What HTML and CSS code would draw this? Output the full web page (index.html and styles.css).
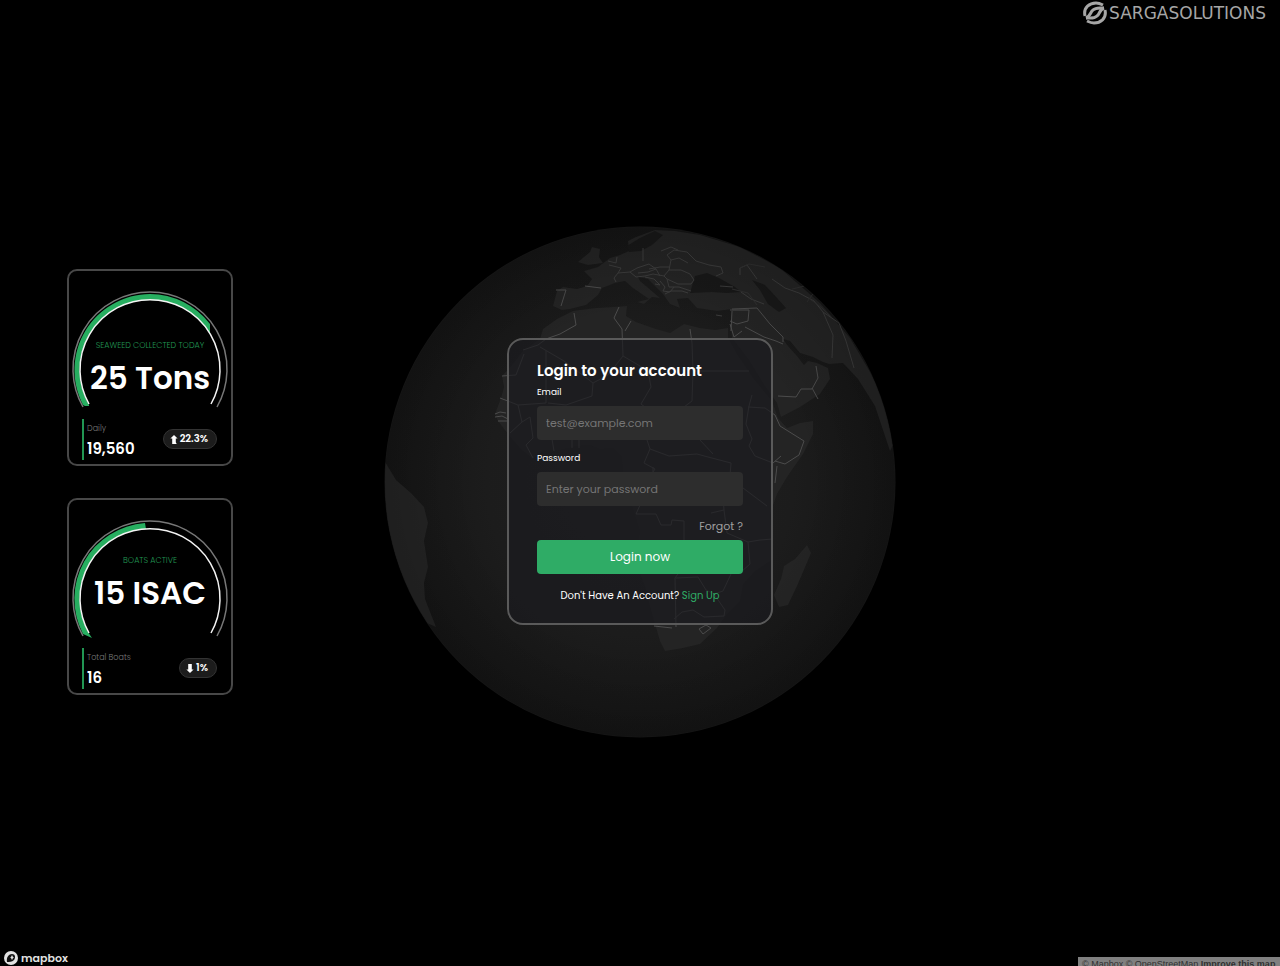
FILE: index.html
```html
<!DOCTYPE html>
<html lang="en">
<head>
<meta charset="utf-8">
<meta name="viewport" content="width=device-width, initial-scale=1">
<title>Sargasolutions</title>
<link rel="stylesheet" href="styles.css">
</head>
<body>
<div class="page">
  <header class="topbar">
    <a class="brand" href="#">
      <svg class="brand-mark" viewBox="0 0 24 24" aria-hidden="true">
        <g fill="none" stroke="#a6a6a6" stroke-width="3">
          <path d="M2 15C0 6 7 2 13 2C16 2 18 3 20 4"/>
          <path d="M3 17C8 15 7 11 10 9C13 6 16 7 21 7"/>
          <path d="M22 9C24 18 17 22 11 22C8 22 6 21 4 20"/>
          <path d="M21 7C16 9 17 13 14 15C11 18 8 17 3 17"/>
        </g>
      </svg>
      <span>SARGASOLUTIONS</span>
    </a>
  </header>

  <main class="stage">
    <svg class="globe" viewBox="384 225 512 512" aria-hidden="true">
      <defs>
        <radialGradient id="ocean">
          <stop offset="0" stop-color="#202020"/>
          <stop offset="0.6" stop-color="#1c1c1c"/>
          <stop offset="1" stop-color="#151515"/>
        </radialGradient>
        <radialGradient id="shade" gradientUnits="userSpaceOnUse" cx="640" cy="481" r="256">
          <stop offset="0.65" stop-color="#000" stop-opacity="0"/>
          <stop offset="1" stop-color="#000" stop-opacity="0.15"/>
        </radialGradient>
        <clipPath id="disc"><circle cx="640" cy="481" r="255"/></clipPath>
      </defs>
      <circle cx="640" cy="481" r="255.5" fill="url(#ocean)"/>
      <g clip-path="url(#disc)">
        <g fill="#242424">
          <path d="M573 310L557 318L543 328L540 338L523 350L513 363L502 375L504 386L501 397L495 413L498 420L508 433L520 447L533 458L543 449L560 449L577 445L590 444L600 448L613 447L622 456L623 470L620 480L627 490L633 508L640 530L637 547L637 565L645 585L650 605L655 623L660 640L665 650L683 647L700 643L717 627L727 613L740 600L743 583L755 570L773 558L772 540L770 513L777 493L787 476L803 453L813 433L813 420L800 422L787 427L778 417L772 400L753 377L737 353L728 337L728 327L715 329L700 327L684 323L670 332L656 328L636 321L626 315L627 305L613 306L596 307L580 309Z"/>
          <path d="M807 544L811 552L806 564L797 585L788 604L779 606L774 594L781 578L784 565L795 558Z"/>
          <path d="M553 305L557 290L563 286L577 288L587 285L592 278L584 270L598 266L610 257L620 254L629 250L628 240L636 236L655 229L675 230L700 234L740 246L780 267L820 302L850 337L880 388L895 440L890 450L875 405L858 378L843 362L829 363L823 361L813 356L800 352L790 340L783 338L788 345L797 355L804 364L808 360L817 362L828 367L830 378L820 393L800 406L781 416L777 402L763 382L749 359L732 337L731 323L732 308L717 310L697 307L688 297L677 298L680 307L670 303L663 293L648 278L638 276L640 280L660 297L652 296L644 303L637 301L649 298L633 287L625 280L615 282L602 287L598 294L586 304L570 308L562 309Z"/>
          <path d="M578 261L590 251L592 246L600 248L599 256L603 262L588 264Z"/>
          <path d="M384 459L396 479L411 492L424 506L428 522L424 540L428 566L424 582L425 598L436 626L400 610L370 520Z"/>
        </g>
        <g fill="#181818">
          <path d="M690 292L695 275L707 272L719 277L735 286L741 291L727 292L712 291Z"/>
          <path d="M752 279L765 284L777 297L786 307L779 311L768 303L760 289Z"/>
          <path d="M627 245L640 237L655 230L663 234L652 244L641 250L629 251Z"/>
        </g>
        <g fill="none" stroke="#4c4c4c" stroke-width="1" stroke-linejoin="round">
          <path d="M574 312L576 324L560 333L546 338L538 344L523 349M619 306L614 317L622 328L623 355M631 320L625 330M690 328L692 342L693 370M692 370L749 370M540 346L564 360L593 382L608 374L623 355L640 365L648 370L651 386L641 403"/>
          <path d="M502 375L516 374L524 353M546 350V402L518 404L500 397M593 382L592 395L566 404L548 402M495 413L500 411L506 412M495 416L502 415L508 418M498 420L508 420M518 404L522 421L510 432M522 421L530 416L533 437L526 444L533 457M554 450L552 438L561 431L558 415M572 447V432M579 447V438L587 427L604 426L612 435L616 424L632 423L644 430L650 448L644 462L655 468L646 482M650 448L669 455L697 453L708 456L731 462M641 403L650 410L653 430L678 415L688 421L700 439L713 453M693 370L692 400L684 406L688 421M752 394L749 405L746 423L752 438L749 445L755 455L773 462L781 455M748 406L765 407L775 414L780 425L804 440L799 454L785 463L775 460M777 465L775 482"/>
          <path d="M653 466V487L646 491L636 513L656 513L661 524L671 524L672 519L684 520L684 541L677 541M731 462L730 475L722 485L724 509L727 532L748 541L760 539L773 538M724 509L711 512M743 487L767 505M748 541L750 563L741 571M684 541L683 566L675 577L676 626M654 625L672 627M676 577L698 576L706 589L714 593L723 590L731 573L724 564M714 593L725 609L724 615L704 616L693 609L682 611L674 618M699 628L706 624L711 627L703 633Z"/>
          <path d="M732 308L757 307L770 323L783 336V341M730 309L749 309L748 320L737 323L730 320M745 326L764 336L776 340L783 343M730 323L734 336L742 330M732 310L731 330M778 395L796 396L801 388L812 388L818 377L816 365M812 387L818 398M556 289L566 289L561 305M585 285L601 287"/>
        </g>
        <g fill="none" stroke="#3c3c3c" stroke-linejoin="round">
          <path d="M608 260L616 262L617 256M609 264L621 267L618 272L614 277L616 281M618 272L630 271L637 267L649 263L656 268L648 271L638 272M643 247V260M630 271L636 276L645 275L653 273L664 275L669 269L681 269L690 273L694 279L691 283L678 283L667 278L664 275M649 268L660 266L669 266M656 268L660 275M645 276L654 278L660 284L655 283M660 280L665 286L663 290L670 291L674 286M667 278L669 286L679 286L691 290M665 293L671 290L682 290L688 292M669 269L671 259L667 254L674 249L687 251L696 260L709 264L721 266L723 272L716 275M671 259L679 257L688 262M661 250L671 246L678 249"/>
          <path d="M772 278L785 287L799 292L814 300L823 311L833 334L832 357M823 311L839 322L846 340L854 367M740 274V267L747 264L757 278M741 291L751 298L764 303M720 285L733 286M716 314L722 315"/>
        </g>
        <g fill="none" stroke="#303030">
          <path d="M810 298L822 307L831 316M807 301L815 290L829 304M792 288L805 285M740 267L749 263L765 266M732 288L748 292L757 304"/>
        </g>
        <circle cx="640" cy="481" r="255" fill="url(#shade)"/>
      </g>
    </svg>

    <section class="stats" aria-label="Statistics">
      <article class="stat">
        <div class="gauge">
          <svg viewBox="0 0 160 118" aria-hidden="true">
            <path class="band" d="M15 116L13 115A76 76 0 0 1 80 4A76 76 0 0 1 140 34V44A70 70 0 0 0 80 10A70 70 0 0 0 19 115V116Z"/>
            <path class="outer" d="M13 117A77 77 0 1 1 147 117"/>
            <path class="inner" d="M19 114A70 70 0 1 1 141 114"/>
          </svg>
          <div class="gauge-text">
            <h2>SEAWEED COLLECTED TODAY</h2>
            <p>25 Tons</p>
          </div>
        </div>
        <div class="stat-foot">
          <dl><dt>Daily</dt><dd>19,560</dd></dl>
          <div class="pill">
            <svg viewBox="0 0 8 10" aria-hidden="true"><path d="M4 0L8 4H6V8L7 10H2V4H0Z"/></svg>
            <span>22.3%</span>
          </div>
        </div>
      </article>
      <article class="stat">
        <div class="gauge">
          <svg viewBox="0 0 160 118" aria-hidden="true">
            <path class="band" d="M22 119L13 115A76 76 0 0 1 75 4L76 10A70 70 0 0 0 18 113Z"/>
            <path class="outer" d="M13 117A77 77 0 1 1 147 117"/>
            <path class="inner" d="M19 114A70 70 0 1 1 141 114"/>
          </svg>
          <div class="gauge-text gauge-text-high">
            <h2>BOATS ACTIVE</h2>
            <p>15 ISAC</p>
          </div>
        </div>
        <div class="stat-foot">
          <dl><dt>Total Boats</dt><dd>16</dd></dl>
          <div class="pill">
            <svg viewBox="0 0 8 10" aria-hidden="true"><path d="M4 10L8 6H6V0H2V6H0Z"/></svg>
            <span>1%</span>
          </div>
        </div>
      </article>
    </section>

    <form class="login">
      <h1>Login to your account</h1>
      <label for="email">Email</label>
      <input id="email" type="email" placeholder="test@example.com">
      <label for="password">Password</label>
      <input id="password" type="password" placeholder="Enter your password">
      <a class="forgot" href="#">Forgot ?</a>
      <button type="submit">Login now</button>
      <p class="signup">Don't Have An Account? <a href="#">Sign Up</a></p>
    </form>
  </main>

  <footer class="map-foot">
    <a class="mapbox" href="#">
      <svg viewBox="0 0 14 14" aria-hidden="true">
        <circle cx="7" cy="7" r="7" fill="#e2e2e2"/>
        <path d="M3 11C2 6 5 3 8 3C11 3 12 6 10 9C8 11 5 11 3 11Z" fill="#111"/>
        <path d="M8 4L9 6L10 6L9 7L8 9L7 7L6 6L7 6Z" fill="#e2e2e2"/>
      </svg>
      <span>mapbox</span>
    </a>
    <div class="credits"><a href="#">© Mapbox</a> <a href="#">© OpenStreetMap</a> <a class="strong" href="#">Improve this map</a></div>
  </footer>
</div>
</body>
</html>
```
FILE: styles.css
```css
* { box-sizing: border-box; }

body {
  margin: 0;
  background: #000;
  color: #fff;
  font-family: Poppins, Inter, "Open Sans", sans-serif;
}

h1, h2, p, dl, dd { margin: 0; }
a { color: inherit; text-decoration: none; }

.page {
  display: flex;
  flex-direction: column;
  min-height: 100vh;
  overflow: hidden;
}

.topbar {
  display: flex;
  justify-content: flex-end;
  height: 26px;
  padding-right: 14px;
}

.brand {
  display: flex;
  align-items: center;
  gap: 2px;
  color: #a6a6a6;
  font-family: "DejaVu Sans", sans-serif;
  font-size: 17px;
  line-height: 26px;
}

.brand-mark { width: 24px; height: 24px; }

.stage {
  position: relative;
  flex: 1;
  display: grid;
  grid-template-columns: 1fr 266px 1fr;
  align-items: center;
}

.globe {
  position: absolute;
  top: 50%;
  left: 50%;
  width: 512px;
  height: 512px;
  transform: translate(-50%, -50%);
}

.stats {
  display: grid;
  gap: 32px;
  width: 166px;
  margin-left: 67px;
}

.stat {
  height: 197px;
  padding: 19px 1px 0;
  border: 2px solid #484848;
  border-radius: 10px;
  background: #000;
}

.gauge { display: grid; }
.gauge > * { grid-area: 1 / 1; }
.gauge svg { width: 100%; overflow: visible; }
.gauge path { fill: none; }
.gauge .band { fill: #27ae60; }
.gauge .outer { stroke: #777; stroke-width: 1.5; }
.gauge .inner { stroke: #f4f4f4; stroke-width: 1.5; }

.gauge-text { padding-top: 49px; text-align: center; }
.gauge-text-high { padding-top: 35px; }

.gauge-text h2 {
  color: #219653;
  font-size: 8px;
  font-weight: 300;
  line-height: 14px;
}

.gauge-text p {
  font-size: 31px;
  font-weight: 600;
  line-height: 50px;
}

.stat-foot {
  display: flex;
  justify-content: space-between;
  align-items: center;
  padding: 11px 13px 0 12px;
}

.stat-foot dl {
  height: 41px;
  padding-left: 3px;
  border-left: 2px solid #219653;
}

.stat-foot dt {
  color: #777;
  font-size: 8px;
  font-weight: 300;
  line-height: 20px;
}

.stat-foot dd {
  font-size: 15px;
  font-weight: 600;
  line-height: 20px;
}

.pill {
  display: flex;
  align-items: center;
  gap: 2px;
  height: 20px;
  padding: 0 8px 0 6px;
  border: 1px solid #333;
  border-radius: 10px;
  background: #1c1c1c;
  font-size: 10px;
  font-weight: 600;
  line-height: 16px;
}

.pill svg { width: 8px; height: 9px; fill: #fff; }

.login {
  position: relative;
  display: flex;
  flex-direction: column;
  height: 287px;
  padding: 19px 28px 0;
  border: 2px solid #5a5a5a;
  border-radius: 16px;
  background: rgba(27, 27, 31, 0.7);
}

.login h1 {
  font-size: 15px;
  font-weight: 600;
  line-height: 23px;
  white-space: nowrap;
}

.login label {
  font-size: 9px;
  line-height: 20px;
}

.login input {
  height: 34px;
  margin: 4px 0 8px;
  padding: 0 9px;
  border: 0;
  border-radius: 4px;
  background: #2d2d2d;
  color: #fff;
  font: inherit;
  font-size: 11px;
}

.login input::placeholder { color: #757575; }

.forgot {
  align-self: flex-end;
  color: #a0a0a0;
  font-size: 11px;
  line-height: 24px;
}

.login button {
  height: 34px;
  margin-top: 2px;
  border: 0;
  border-radius: 4px;
  background: #2fac66;
  color: #fff;
  font: inherit;
  font-size: 12px;
}

.signup {
  margin-top: 12px;
  font-size: 10px;
  line-height: 20px;
  text-align: center;
  white-space: nowrap;
}

.signup a { color: #2fac66; }

.map-foot {
  display: flex;
  justify-content: space-between;
  align-items: flex-end;
  height: 29px;
  padding-left: 4px;
}

.mapbox {
  display: flex;
  align-items: center;
  gap: 3px;
  color: #e2e2e2;
  font-size: 11px;
  font-weight: 600;
  line-height: 16px;
}

.mapbox svg { width: 14px; height: 14px; }

.credits {
  height: 9px;
  width: 202px;
  padding-left: 4px;
  overflow: hidden;
  background: #808080;
  color: #303030;
  font-family: "Liberation Sans", Arial, sans-serif;
  font-size: 9px;
  line-height: 14px;
  white-space: nowrap;
}

.credits .strong { font-weight: 700; }
```
